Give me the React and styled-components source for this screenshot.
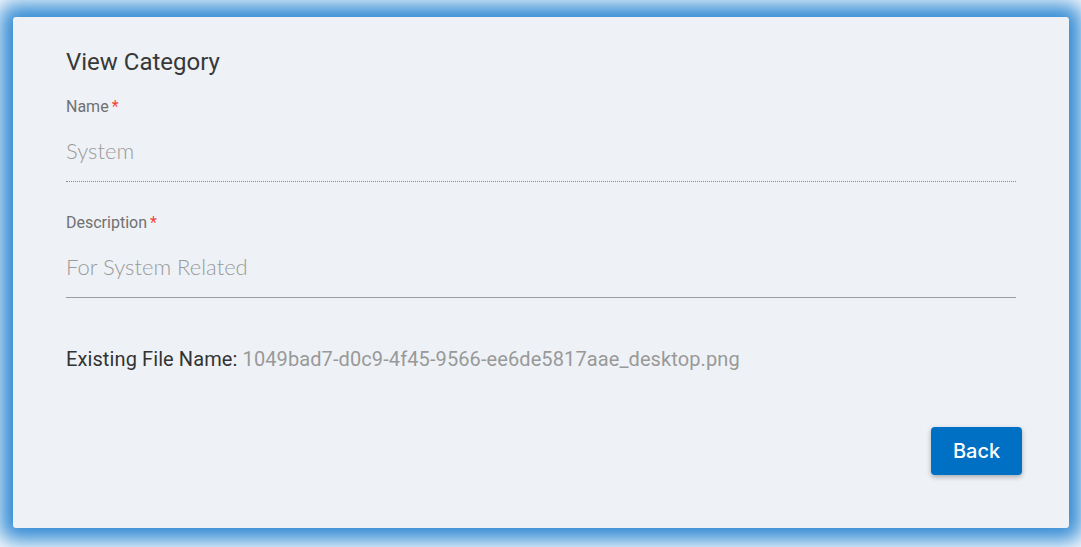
import React from "react";
import styled, { createGlobalStyle } from "styled-components";

const Global = createGlobalStyle`
  html, body { margin: 0; padding: 0; }
  body {
    background: #ffffff;
    font-family: Roboto, "Liberation Sans", sans-serif;
    width: 1081px;
    height: 547px;
    overflow: hidden;
  }
`;

const Page = styled.div`
  padding: 17px 12px 19px 13px;
  box-sizing: border-box;
  width: 1081px;
  height: 547px;
`;

const Card = styled.section`
  background: #eef2f6;
  border-radius: 3px;
  box-shadow: 0 0 22px 13px #2d88d3;
  height: 511px;
  box-sizing: border-box;
  padding: 31px 53px 53px 53px;
  display: flex;
  flex-direction: column;
`;

const Title = styled.h2`
  margin: 0 0 21px;
  font-family: Roboto, sans-serif;
  font-weight: 400;
  font-size: 24px;
  line-height: 28px;
  color: #383838;
`;

const Field = styled.div`
  display: flex;
  flex-direction: column;
  margin-bottom: 31px;
`;

const Label = styled.label`
  font-size: 16px;
  line-height: 20px;
  color: #707070;
  font-family: Roboto, sans-serif;
`;

const Star = styled.span`
  color: #f44336;
  margin-left: 3px;
`;

const Value = styled.div`
  margin-top: 7px;
  padding: 14px 0 17px;
  font-family: Lato, "Open Sans", sans-serif;
  font-weight: 300;
  font-size: 22px;
  line-height: 26px;
  color: #9a9a9a;
  border-bottom: 1px ${(p) => (p.$dotted ? "dotted #8a8a8a" : "solid #9e9e9e")};
`;

const FileRow = styled.p`
  margin: 17px 0 0;
  font-size: 20px;
  line-height: 26px;
  letter-spacing: 0.1px;
  color: #333333;
  font-family: Roboto, sans-serif;
`;

const FileName = styled.span`
  color: #999999;
`;

const Actions = styled.div`
  margin-top: auto;
  display: flex;
  justify-content: flex-end;
  margin-right: -6px;
`;

const Button = styled.button`
  width: 91px;
  height: 48px;
  border: none;
  border-radius: 4px;
  background: #0070c4;
  color: #ffffff;
  font-family: Inter, Roboto, sans-serif;
  font-size: 20px;
  font-weight: 500;
  box-shadow: 0 2px 5px rgba(0, 0, 0, 0.3);
  cursor: pointer;
`;

export default function App() {
  return (
    <>
      <Global />
      <Page>
        <Card>
          <Title>View Category</Title>
          <Field>
            <Label>
              Name<Star>*</Star>
            </Label>
            <Value $dotted>System</Value>
          </Field>
          <Field>
            <Label>
              Description<Star>*</Star>
            </Label>
            <Value>For System Related</Value>
          </Field>
          <FileRow>
            Existing File Name: <FileName>1049bad7-d0c9-4f45-9566-ee6de5817aae_desktop.png</FileName>
          </FileRow>
          <Actions>
            <Button>Back</Button>
          </Actions>
        </Card>
      </Page>
    </>
  );
}
